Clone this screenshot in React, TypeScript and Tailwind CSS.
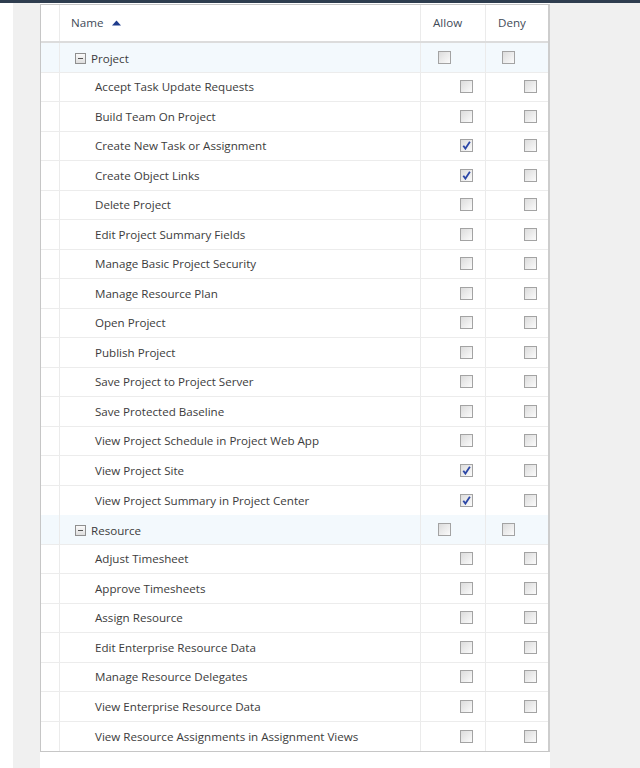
const GROUPS: { name: string; items: { label: string; allow?: boolean }[] }[] = [
  {
    name: 'Project',
    items: [
      { label: 'Accept Task Update Requests' },
      { label: 'Build Team On Project' },
      { label: 'Create New Task or Assignment', allow: true },
      { label: 'Create Object Links', allow: true },
      { label: 'Delete Project' },
      { label: 'Edit Project Summary Fields' },
      { label: 'Manage Basic Project Security' },
      { label: 'Manage Resource Plan' },
      { label: 'Open Project' },
      { label: 'Publish Project' },
      { label: 'Save Project to Project Server' },
      { label: 'Save Protected Baseline' },
      { label: 'View Project Schedule in Project Web App' },
      { label: 'View Project Site', allow: true },
      { label: 'View Project Summary in Project Center', allow: true },
    ],
  },
  {
    name: 'Resource',
    items: [
      { label: 'Adjust Timesheet' },
      { label: 'Approve Timesheets' },
      { label: 'Assign Resource' },
      { label: 'Edit Enterprise Resource Data' },
      { label: 'Manage Resource Delegates' },
      { label: 'View Enterprise Resource Data' },
      { label: 'View Resource Assignments in Assignment Views' },
    ],
  },
];

function Box({ checked }: { checked?: boolean }) {
  return (
    <span className="flex h-[13px] w-[13px] items-center justify-center border border-[#a3a3a3] bg-gradient-to-br from-[#dcdcdc] to-[#fbfbfb]">
      {checked && (
        <svg width="9" height="9" viewBox="0 0 9 9">
          <path d="M1.3 4.8 L3.4 7.6 L7.9 0.8" fill="none" stroke="#2b46a6" strokeWidth="1.8" />
        </svg>
      )}
    </span>
  );
}

function Collapse() {
  return (
    <span className="mr-[5px] flex h-[11px] w-[11px] items-center justify-center border border-[#8f8f8f] bg-gradient-to-b from-[#fafafa] to-[#dedede]">
      <span className="h-[1px] w-[5px] bg-[#555]" />
    </span>
  );
}

export default function App() {
  return (
    <div className="flex h-[768px] w-[640px] flex-col overflow-hidden bg-white font-['Open_Sans',sans-serif] text-[11.6px] text-[#3c3c3c]">
      <div className="h-[3px] bg-[#2e3d4f]" />
      <div className="flex flex-1">
        <div className="w-[13px] bg-white" />
        <div className="flex flex-1 bg-[#f0f0f0] pl-[27px]">
          <div className="w-[510px] bg-white pt-[1px]">
            <div className="border border-r-2 border-[#c6c6c6] border-r-[#cdcdcd]">
              <div className="flex h-[38px] border-b-2 border-[#dcdcdc] bg-white">
                <div className="w-[19px] border-r border-[#ebebeb]" />
                <div className="flex w-[361px] items-center border-r border-[#ebebeb] pl-[11px] text-[#3f4b58]">
                  Name
                  <svg className="ml-[9px]" width="9" height="6" viewBox="0 0 9 6">
                    <path d="M0 5.5 L4.5 0.5 L9 5.5 Z" fill="#1f3c8c" />
                  </svg>
                </div>
                <div className="flex w-[65px] items-center border-r border-[#ebebeb] pl-[12px] text-[#3f4b58]">Allow</div>
                <div className="flex flex-1 items-center pl-[12px] text-[#3f4b58]">Deny</div>
              </div>
              {GROUPS.map((g) => (
                <div key={g.name}>
                  <div className="flex h-[29.5px] border-b border-[#ececec] bg-[#f3f9fd]">
                    <div className="w-[19px] border-r border-[#ebebeb]" />
                    <div className="flex w-[361px] items-center border-r border-[#ebebeb] pl-[15px] pt-[2px]">
                      <Collapse />
                      {g.name}
                    </div>
                    <div className="flex w-[65px] items-center border-r border-[#ebebeb] pl-[17px]">
                      <Box />
                    </div>
                    <div className="flex flex-1 items-center pl-[16px]">
                      <Box />
                    </div>
                  </div>
                  {g.items.map((it) => (
                    <div key={it.label} className="flex h-[29.5px] border-b border-[#ececec] last:border-b-0">
                      <div className="w-[19px] border-r border-[#ebebeb]" />
                      <div className="flex w-[361px] items-center border-r border-[#ebebeb] pl-[35px]">{it.label}</div>
                      <div className="flex w-[65px] items-center justify-end border-r border-[#ebebeb] pr-[12px]">
                        <Box checked={it.allow} />
                      </div>
                      <div className="flex flex-1 items-center justify-end pr-[11px]">
                        <Box />
                      </div>
                    </div>
                  ))}
                </div>
              ))}
            </div>
          </div>
        </div>
      </div>
    </div>
  );
}
